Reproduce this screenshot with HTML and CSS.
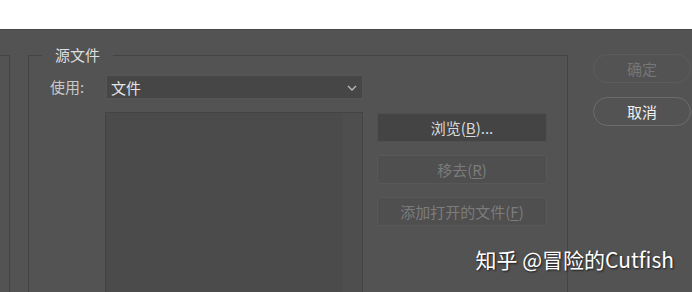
FILE: index.html
```html
<!DOCTYPE html>
<html lang="zh-CN">
<head>
    <meta charset="UTF-8">
    <meta name="viewport" content="width=device-width, initial-scale=1.0">
    <title>源文件</title>
    <link rel="stylesheet" href="styles.css">
</head>
<body>
    <div class="topbar"></div>
    <div class="dialog">
        <div class="side-box"></div>
        <fieldset class="group">
            <legend>源文件</legend>
            <div class="group-body">
                <label class="use-label">使用:</label>
                <div class="select">
                    <span>文件</span>
                    <svg class="chevron" width="10" height="6" viewBox="0 0 10 6"><path d="M1 1 L5 5 L9 1" fill="none" stroke="#bdbdbd" stroke-width="1.3"/></svg>
                </div>
                <div class="file-list"><div class="scroll-track"></div></div>
                <div class="side-buttons">
                    <button class="btn">浏览(<u>B</u>)...</button>
                    <button class="btn" disabled>移去(<u>R</u>)</button>
                    <button class="btn" disabled>添加打开的文件(<u>F</u>)</button>
                </div>
            </div>
        </fieldset>
        <div class="dialog-actions">
            <button class="pill" disabled>确定</button>
            <button class="pill">取消</button>
        </div>
    </div>
    <div class="watermark">知乎 @冒险的Cutfish</div>
</body>
</html>
```

FILE: styles.css
```css
body {
    margin: 0;
    padding: 0;
    width: 692px;
    height: 292px;
    overflow: hidden;
    background-color: #535353;
    font-family: "Noto Sans CJK SC", "Noto Sans", sans-serif;
    font-size: 15px;
    position: relative;
}
.topbar {
    height: 29px;
    background-color: #ffffff;
}
.dialog {
    display: flex;
    align-items: flex-start;
    height: 262px;
    overflow: hidden;
    border-top: 1px solid #474747;
    background-color: #535353;
}
.side-box {
    flex: none;
    width: 9px;
    height: 300px;
    margin-top: 25px;
    border-top: 1px solid #444444;
    border-right: 1px solid #444444;
}
.group {
    flex: none;
    margin: 17px 0 0 18px;
    padding: 0;
    width: 538px;
    min-width: 0;
    height: 300px;
    border: 1px solid #444444;
    border-bottom: none;
}
.group legend {
    margin-left: 13px;
    padding: 0 13px;
    line-height: 16px;
    color: #dedede;
}
.group-body {
    display: grid;
    grid-template-columns: 55px 258px 184px;
    grid-template-rows: 24px auto;
    row-gap: 13px;
    padding: 12px 0 0 21px;
}
.use-label {
    align-self: center;
    color: #c9c9c9;
    line-height: 18px;
}
.select {
    display: flex;
    align-items: center;
    justify-content: space-between;
    margin-left: 1px;
    padding: 0 5px 0 4px;
    background-color: #464646;
    border: 1px solid #565656;
    color: #e4e4e4;
}
.chevron { margin-top: 1px; }
.file-list {
    grid-column: 2;
    display: flex;
    justify-content: flex-end;
    height: 200px;
    background-color: #4b4b4b;
    border-top: 1px solid #444444;
    border-left: 1px solid #434343;
    border-right: 1px solid #444444;
}
.scroll-track {
    width: 19px;
    background-color: #4e4e4e;
}
.side-buttons {
    grid-column: 3;
    display: flex;
    flex-direction: column;
    gap: 13px;
    margin: 1px 0 0 14px;
}
.btn {
    height: 29px;
    padding: 0;
    font-family: inherit;
    font-size: 15px;
    background-color: #444444;
    border: 1px solid #505050;
    border-radius: 2px;
    color: #dadada;
}
.btn:disabled {
    background-color: #4f4f4f;
    border-color: #585858;
    color: #7c7c7c;
}
.btn u { text-underline-offset: 2px; }
.dialog-actions {
    flex: none;
    display: flex;
    flex-direction: column;
    gap: 14px;
    width: 98px;
    margin: 24px 0 0 25px;
}
.pill {
    height: 29px;
    padding: 0;
    font-family: inherit;
    font-size: 15px;
    background: transparent;
    border: 1px solid #6c6c6c;
    border-radius: 15px;
    color: #f0f0f0;
}
.pill:disabled {
    border-color: #5c5c5c;
    color: #767676;
}
.watermark {
    position: absolute;
    right: 18px;
    top: 245px;
    font-size: 21px;
    line-height: 28px;
    color: #ffffff;
    text-shadow: 1px 1px 2px rgba(0, 0, 0, 0.7);
}
```
